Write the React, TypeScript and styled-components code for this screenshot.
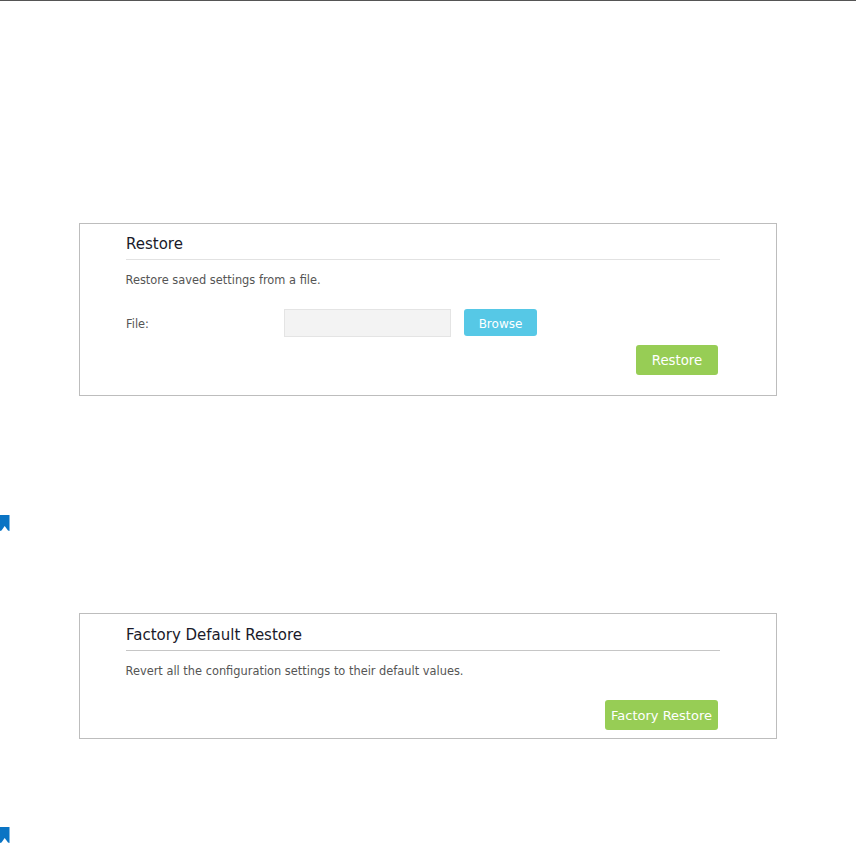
import React from 'react';
import styled, { createGlobalStyle } from 'styled-components';

const GlobalStyle = createGlobalStyle`
  html, body {
    margin: 0;
    padding: 0;
    background: #fff;
    font-family: 'DejaVu Sans', Verdana, sans-serif;
  }
`;

const Bookmark: React.FC = () => (
  <Marker width="10" height="16" viewBox="0 0 10 16">
    <path d="M0 0H9.5V16L8 15.5L4.7 11L1.5 15.5L0 16Z" fill="#0a74c4" />
  </Marker>
);

export default function App() {
  return (
    <Page>
      <GlobalStyle />
      <RestoreSection>
        <Panel>
          <Title>Restore</Title>
          <Description>Restore saved settings from a file.</Description>
          <FileRow>
            <FileLabel>File:</FileLabel>
            <FileInput />
            <BrowseButton>Browse</BrowseButton>
          </FileRow>
          <Actions>
            <ApplyButton>Restore</ApplyButton>
          </Actions>
        </Panel>
      </RestoreSection>
      <Bookmark />
      <FactorySection>
        <Panel>
          <Title $strong>Factory Default Restore</Title>
          <Description>Revert all the configuration settings to their default values.</Description>
          <Actions $factory>
            <ApplyButton $wide>Factory Restore</ApplyButton>
          </Actions>
        </Panel>
      </FactorySection>
      <Bookmark />
    </Page>
  );
}

const Page = styled.div`
  width: 856px;
  height: 843px;
  overflow: hidden;
  box-sizing: border-box;
  border-top: 1px solid #555;
`;

const RestoreSection = styled.section`
  padding: 222px 79px 119px;
`;

const FactorySection = styled.section`
  padding: 82px 79px 88px;
`;

const Panel = styled.div`
  box-sizing: border-box;
  width: 698px;
  border: 1px solid #bdbdbd;
  padding: 0 56px 0 46px;
`;

const Title = styled.h2<{ $strong?: boolean }>`
  margin: 0;
  height: ${({ $strong }) => ($strong ? '37px' : '36px')};
  box-sizing: border-box;
  padding-top: ${({ $strong }) => ($strong ? '12px' : '11px')};
  border-bottom: 1px solid ${({ $strong }) => ($strong ? '#c6c6c6' : '#e2e2e2')};
  font-size: 15px;
  line-height: 19px;
  font-weight: 400;
  color: #1a1a2a;
`;

const Description = styled.p`
  margin: 12px 0 0 -0.5px;
  font-size: 11.4px;
  line-height: 16px;
  color: #555;
`;

const FileRow = styled.div`
  display: flex;
  align-items: flex-start;
  margin-top: 21px;
`;

const FileLabel = styled.span`
  width: 158px;
  height: 28px;
  font-size: 11.4px;
  line-height: 30px;
  color: #555;
`;

const FileInput = styled.div`
  box-sizing: border-box;
  width: 167px;
  height: 28px;
  background: #f3f3f3;
  border: 1px solid #e4e4e4;
`;

const BrowseButton = styled.div`
  width: 73px;
  height: 27px;
  margin-left: 13px;
  border-radius: 3px;
  background: #56c8e6;
  color: #fff;
  font-size: 12px;
  line-height: 30px;
  text-align: center;
`;

const Actions = styled.div<{ $factory?: boolean }>`
  display: flex;
  justify-content: flex-end;
  padding: ${({ $factory }) => ($factory ? '21px 2px 8px 0' : '8px 2px 20px 0')};
`;

const ApplyButton = styled.div<{ $wide?: boolean }>`
  width: ${({ $wide }) => ($wide ? '113px' : '82px')};
  height: 30px;
  border-radius: 3px;
  background: #97cd55;
  color: #fff;
  font-size: ${({ $wide }) => ($wide ? '13px' : '13.3px')};
  line-height: 31px;
  text-align: center;
  white-space: nowrap;
`;

const Marker = styled.svg`
  display: block;
`;
